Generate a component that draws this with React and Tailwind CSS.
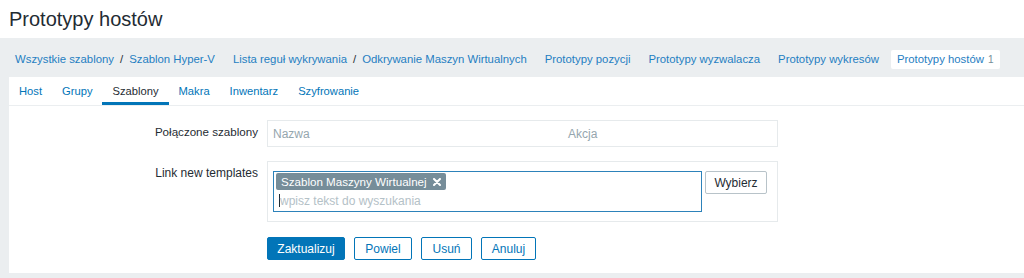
import React from 'react';

const CRUMBS = [
  { items: ['Wszystkie szablony', 'Szablon Hyper-V'] },
  { items: ['Lista reguł wykrywania', 'Odkrywanie Maszyn Wirtualnych'] },
  { items: ['Prototypy pozycji'] },
  { items: ['Prototypy wyzwalacza'] },
  { items: ['Prototypy wykresów'] },
];

const TABS = ['Host', 'Grupy', 'Szablony', 'Makra', 'Inwentarz', 'Szyfrowanie'];

const ACTIONS = [
  { label: 'Zaktualizuj', w: 'w-[78px]', primary: true },
  { label: 'Powiel', w: 'w-[58px]' },
  { label: 'Usuń', w: 'w-[51px]' },
  { label: 'Anuluj', w: 'w-[55px]' },
];

export default function App() {
  return (
    <div className="min-h-[278px] bg-[#ebeef0] text-[12px] text-[#1f2c33] font-['Liberation_Sans',Arial,sans-serif] overflow-hidden">
      {/* Page title */}
      <header className="h-[38px] bg-white flex items-center px-[9px]">
        <h1 className="text-[20px] leading-none text-[#1f2c33]">Prototypy hostów</h1>
      </header>

      {/* Breadcrumbs */}
      <nav className="flex items-center pt-[12px] pb-[8px] pl-[9px] whitespace-nowrap text-[11.35px]">
        {CRUMBS.map((group, i) => (
          <div key={i} className="flex items-center h-[19px] px-[6px] mr-[6px]">
            {group.items.map((item, j) => (
              <React.Fragment key={item}>
                {j > 0 && <span className="mx-[6px] text-[#1f2c33]">/</span>}
                <a className="text-[#1f7ec2]">{item}</a>
              </React.Fragment>
            ))}
          </div>
        ))}
        <div className="flex items-center h-[19px] px-[6px] bg-white rounded-[2px]">
          <span className="text-[#1f7ec2]">Prototypy hostów</span>
          <span className="ml-[4px] text-[10px] text-[#768d99]">1</span>
        </div>
      </nav>

      {/* Tabbed form */}
      <div className="ml-[9px] bg-white pb-[13px]">
        <ul className="flex h-[29px] border-b border-[#ebeef0] text-[11.2px]">
          {TABS.map((tab) => (
            <li
              key={tab}
              className={`flex items-center px-[10px] ${
                tab === 'Szablony'
                  ? 'border-b-[3px] border-[#0275b8] pt-[3px] text-[#1f2c33]'
                  : 'text-[#0275b8]'
              }`}
            >
              {tab}
            </li>
          ))}
        </ul>

        <div className="pt-[14px]">
          {/* Linked templates */}
          <div className="flex">
            <label className="w-[258px] pr-[9px] text-right pt-[5px] leading-[14px] text-[11.6px]">Połączone szablony</label>
            <div className="w-[511px] h-[27px] border border-[#e6eaec] flex items-center px-[5px] text-[#95a6ae]">
              <span className="w-[295px]">Nazwa</span>
              <span>Akcja</span>
            </div>
          </div>

          {/* Link new templates */}
          <div className="flex mt-[14px]">
            <label className="w-[258px] pr-[9px] text-right pt-[5px] leading-[14px]">Link new templates</label>
            <div className="w-[511px] h-[61px] border border-[#e6eaec] pt-[9px] px-[5px] flex items-start">
              <div className="w-[429px] h-[41px] border border-[#2d82ba] px-[2px] pt-[1px]">
                <div className="inline-flex items-center h-[17px] bg-[#768d99] text-white text-[11.6px] pl-[5px] pr-[5px] rounded-[2px]">
                  <span>Szablon Maszyny Wirtualnej</span>
                  <svg className="ml-[6px]" width="8" height="8" viewBox="0 0 8 8">
                    <path d="M1 1 L7 7 M7 1 L1 7" stroke="white" strokeWidth="2" strokeLinecap="round" />
                  </svg>
                </div>
                <div className="flex items-center h-[19px] pl-[3px]">
                  <span className="w-px h-[13px] bg-[#1f2c33]" />
                  <span className="text-[#b4c1c7]">wpisz tekst do wyszukania</span>
                </div>
              </div>
              <button className="ml-[3px] h-[23px] w-[62px] border border-[#b8c3c9] rounded-[2px] bg-white text-[#1f2c33]">
                Wybierz
              </button>
            </div>
          </div>

          {/* Actions */}
          <div className="flex gap-[9px] mt-[15px] ml-[258px]">
            {ACTIONS.map((a) => (
              <button
                key={a.label}
                className={`h-[23px] ${a.w} rounded-[2px] border border-[#0275b8] ${
                  a.primary ? 'bg-[#0275b8] text-white' : 'bg-white text-[#0275b8]'
                }`}
              >
                {a.label}
              </button>
            ))}
          </div>
        </div>
      </div>
    </div>
  );
}
